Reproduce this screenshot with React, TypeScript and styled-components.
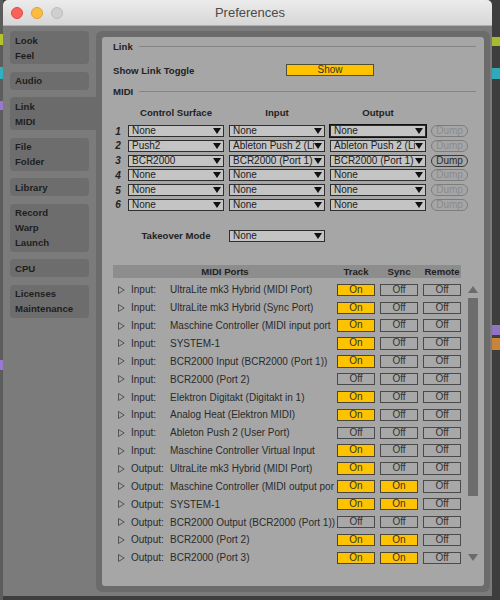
import React from 'react';
import styled, { createGlobalStyle } from 'styled-components';

const Global = createGlobalStyle`
  html, body { margin: 0; padding: 0; background: #3f3f3f; }
  body { font-family: "Liberation Sans", Arial, sans-serif; color: #222; }
`;

const Screen = styled.div`
  width: 500px;
  height: 600px;
  display: flex;
  align-items: flex-start;
  background: #3e3e3e;
  overflow: hidden;
`;

const Strip = styled.div<{ $w: number; $bg: string }>`
  width: ${(p) => p.$w}px;
  height: 600px;
  flex-shrink: 0;
  display: flex;
  flex-direction: column;
  background: ${(p) => p.$bg};
`;

const Tick = styled.div<{ $h: number; $c?: string }>`
  height: ${(p) => p.$h}px;
  flex-shrink: 0;
  background: ${(p) => p.$c || 'transparent'};
`;

const Window = styled.div`
  width: 489px;
  height: 596px;
  flex-shrink: 0;
  display: flex;
  flex-direction: column;
  border-radius: 5px 5px 0 0;
  overflow: hidden;
`;

const TitleBar = styled.div`
  height: 25px;
  flex-shrink: 0;
  display: grid;
  grid-template-columns: 70px 1fr 70px;
  align-items: center;
  background: linear-gradient(#ececec, #d6d6d6);
  border-bottom: 1px solid #b0b0b0;
`;

const Lights = styled.div`
  display: flex;
  gap: 8px;
  padding-left: 8px;
`;

const Light = styled.div<{ $c: string; $b: string }>`
  width: 12px;
  height: 12px;
  border-radius: 50%;
  box-sizing: border-box;
  background: ${(p) => p.$c};
  border: 1px solid ${(p) => p.$b};
`;

const Title = styled.div`
  text-align: center;
  font-size: 13px;
  color: #4a4a4a;
  padding-left: 5px;
  font-family: "Liberation Sans", Arial, sans-serif;
`;

const Body = styled.div`
  flex: 1;
  display: flex;
  background: #7b7b7b;
`;

const Sidebar = styled.div`
  width: 93px;
  flex-shrink: 0;
  box-sizing: border-box;
  padding: 5px 0 0 7px;
  display: flex;
  flex-direction: column;
  gap: 7.5px;
`;

const Tab = styled.div<{ $active?: boolean }>`
  width: ${(p) => (p.$active ? 86 : 79)}px;
  box-sizing: border-box;
  padding: 1.5px 5px;
  background: ${(p) => (p.$active ? '#6b6b6b' : '#6d6d6d')};
  border-radius: ${(p) => (p.$active ? '4px 0 0 4px' : '4px')};
  font-size: 9.6px;
  font-weight: bold;
  line-height: 15px;
  color: #1e1e1e;
`;

const Frame = styled.div`
  width: 394px;
  box-sizing: border-box;
  margin: 5px 2px 4px 0;
  padding: 6px;
  background: #6b6b6b;
  border-radius: 6px;
  display: flex;
`;

const Panel = styled.div`
  flex: 1;
  background: #a6a6a6;
  border-radius: 3px;
  padding: 2px 0 0 11px;
  display: flex;
  flex-direction: column;
`;

const SectionHeader = styled.div<{ $mt?: number }>`
  height: 14px;
  margin-top: ${(p) => p.$mt || 0}px;
  display: flex;
  align-items: center;
  gap: 6px;
  padding-right: 8px;
  font-size: 9.6px;
  font-weight: bold;
`;

const Rule = styled.div`
  flex: 1;
  height: 1px;
  background: #858585;
`;

const ShowRow = styled.div`
  margin-top: 10px;
  height: 14px;
  display: grid;
  grid-template-columns: 173px 88px;
  align-items: center;
  font-size: 9.6px;
  font-weight: bold;
`;

const YellowButton = styled.div`
  height: 12px;
  box-sizing: border-box;
  background: #fdc300;
  border: 1px solid #4d4d3a;
  font-size: 10px;
  font-weight: normal;
  line-height: 10px;
  text-align: center;
  color: #333;
`;

const SurfaceGrid = styled.div<{ $mt: number }>`
  margin-top: ${(p) => p.$mt}px;
  display: grid;
  grid-template-columns: 10px 96px 96px 96px 37px;
  column-gap: 5px;
  row-gap: 2.8px;
  grid-auto-rows: 12px;
  align-items: center;
`;

const ColHead = styled.div<{ $col: number }>`
  grid-column: ${(p) => p.$col};
  text-align: center;
  font-size: 9.6px;
  font-weight: bold;
  white-space: nowrap;
`;

const Num = styled.div`
  font-size: 10px;
  font-weight: bold;
  font-style: italic;
  text-align: center;
`;

const Select = styled.div<{ $focus?: boolean; $col?: number }>`
  grid-column: ${(p) => p.$col || 'auto'};
  height: 12px;
  box-sizing: border-box;
  background: #c4c4c4;
  border: 1px solid #2e2e2e;
  outline: ${(p) => (p.$focus ? '1px solid #111' : 'none')};
  display: flex;
  align-items: center;
  padding: 0 2px 0 3px;
  font-size: 10px;
  color: #222;
  overflow: hidden;
`;

const SelectText = styled.span`
  flex: 1;
  min-width: 0;
  white-space: nowrap;
  overflow: hidden;
  line-height: 10px;
`;

const Dump = styled.div<{ $on?: boolean }>`
  height: 12px;
  box-sizing: border-box;
  border: 1px solid ${(p) => (p.$on ? '#3a3a3a' : '#7d7d7d')};
  border-radius: 6px;
  font-size: 10px;
  line-height: 10px;
  text-align: center;
  color: ${(p) => (p.$on ? '#2a2a2a' : '#8b8b8b')};
`;

const portCols = '18px 39px 167px 43px 43px 38px';

const PortsHeader = styled.div`
  margin-top: 23px;
  width: 348px;
  height: 13px;
  background: #8d8d8d;
  display: grid;
  grid-template-columns: ${portCols};
  align-items: center;
  font-size: 9.6px;
  font-weight: bold;
`;

const HeadCell = styled.div<{ $span?: string }>`
  grid-column: ${(p) => p.$span || 'auto'};
  width: ${(p) => (p.$span ? 'auto' : '38px')};
  text-align: center;
`;

const PortsBody = styled.div`
  margin-top: 3px;
  display: flex;
  gap: 7px;
`;

const PortList = styled.div`
  width: 348px;
  display: flex;
  flex-direction: column;
`;

const PortRow = styled.div`
  height: 17.87px;
  display: grid;
  grid-template-columns: ${portCols};
  align-items: center;
  font-size: 10px;
  color: #2a2a2a;
`;

const Expander = styled.div`
  display: flex;
  padding-left: 5px;
`;

const Cell = styled.div`
  white-space: nowrap;
  overflow: hidden;
`;

const Toggle = styled.div<{ $on: boolean }>`
  width: 38px;
  height: 12.5px;
  box-sizing: border-box;
  background: ${(p) => (p.$on ? '#fdc300' : '#a8a8a8')};
  border: 1px solid ${(p) => (p.$on ? '#4a4536' : '#4a4a4a')};
  text-align: center;
  font-size: 10px;
  line-height: 10.5px;
  color: #333;
`;

const Scrollbar = styled.div`
  width: 10px;
  display: flex;
  flex-direction: column;
  align-items: center;
  padding: 5.5px 0 5.5px;
`;

const Thumb = styled.div`
  margin-top: 4.5px;
  width: 10px;
  height: 198px;
  background: #6d6d6d;
`;

const Spacer = styled.div`
  flex: 1;
`;

const Arrow = ({ up }: { up?: boolean }) => (
  <svg width="10" height="7" viewBox="0 0 10 7">
    <polygon points={up ? '5,0 10,7 0,7' : '0,0 10,0 5,7'} fill="#6b6b6b" />
  </svg>
);

const DropArrow = () => (
  <svg width="8" height="6" viewBox="0 0 8 6">
    <polygon points="0,0 8,0 4,6" fill="#111" />
  </svg>
);

const OpenTri = () => (
  <svg width="7" height="8" viewBox="0 0 7 8">
    <polygon points="0.5,0.5 6.2,4 0.5,7.5" fill="none" stroke="#555" strokeWidth="1" />
  </svg>
);

const surfaces: [string, string, string, boolean][] = [
  ['None', 'None', 'None', false],
  ['Push2', 'Ableton Push 2 (Li', 'Ableton Push 2 (Li', false],
  ['BCR2000', 'BCR2000 (Port 1)', 'BCR2000 (Port 1)', true],
  ['None', 'None', 'None', false],
  ['None', 'None', 'None', false],
  ['None', 'None', 'None', false],
];

const ports: [string, string, boolean, boolean, boolean][] = [
  ['Input:', 'UltraLite mk3 Hybrid (MIDI Port)', true, false, false],
  ['Input:', 'UltraLite mk3 Hybrid (Sync Port)', true, false, false],
  ['Input:', 'Maschine Controller (MIDI input port', true, false, false],
  ['Input:', 'SYSTEM-1', true, false, false],
  ['Input:', 'BCR2000 Input (BCR2000 (Port 1))', true, false, false],
  ['Input:', 'BCR2000 (Port 2)', false, false, false],
  ['Input:', 'Elektron Digitakt (Digitakt in 1)', true, false, false],
  ['Input:', 'Analog Heat (Elektron MIDI)', true, false, false],
  ['Input:', 'Ableton Push 2 (User Port)', false, false, false],
  ['Input:', 'Maschine Controller Virtual Input', true, false, false],
  ['Output:', 'UltraLite mk3 Hybrid (MIDI Port)', true, false, false],
  ['Output:', 'Maschine Controller (MIDI output por', true, true, false],
  ['Output:', 'SYSTEM-1', true, true, false],
  ['Output:', 'BCR2000 Output (BCR2000 (Port 1))', false, false, false],
  ['Output:', 'BCR2000 (Port 2)', true, true, false],
  ['Output:', 'BCR2000 (Port 3)', true, true, false],
];

const tabs: { lines: string[]; active?: boolean }[] = [
  { lines: ['Look', 'Feel'] },
  { lines: ['Audio'] },
  { lines: ['Link', 'MIDI'], active: true },
  { lines: ['File', 'Folder'] },
  { lines: ['Library'] },
  { lines: ['Record', 'Warp', 'Launch'] },
  { lines: ['CPU'] },
  { lines: ['Licenses', 'Maintenance'] },
];

export default function App() {
  return (
    <>
      <Global />
      <Screen>
        <Strip $w={3} $bg="#5c5c5c">
          <Tick $h={34} />
          <Tick $h={11} $c="#b4c52c" />
          <Tick $h={22} />
          <Tick $h={12} $c="#32b0c0" />
          <Tick $h={22} />
          <Tick $h={9} $c="#9a78cf" />
          <Tick $h={250} />
          <Tick $h={10} $c="#9a78cf" />
        </Strip>
        <Window>
          <TitleBar>
            <Lights>
              <Light $c="#fc605b" $b="#de4a43" />
              <Light $c="#fdbc40" $b="#dea236" />
              <Light $c="#cfcfcf" $b="#bdbdbd" />
            </Lights>
            <Title>Preferences</Title>
            <div />
          </TitleBar>
          <Body>
            <Sidebar>
              {tabs.map((t, i) => (
                <Tab key={i} $active={t.active}>
                  {t.lines.map((l) => (
                    <div key={l}>{l}</div>
                  ))}
                </Tab>
              ))}
            </Sidebar>
            <Frame>
              <Panel>
                <SectionHeader>
                  Link
                  <Rule />
                </SectionHeader>
                <ShowRow>
                  <div>Show Link Toggle</div>
                  <YellowButton>Show</YellowButton>
                </ShowRow>
                <SectionHeader $mt={7}>
                  MIDI
                  <Rule />
                </SectionHeader>
                <SurfaceGrid $mt={8}>
                  <ColHead $col={2}>Control Surface</ColHead>
                  <ColHead $col={3}>Input</ColHead>
                  <ColHead $col={4}>Output</ColHead>
                </SurfaceGrid>
                <SurfaceGrid $mt={7}>
                  {surfaces.map((s, i) => (
                    <React.Fragment key={i}>
                      <Num>{i + 1}</Num>
                      <Select>
                        <SelectText>{s[0]}</SelectText>
                        <DropArrow />
                      </Select>
                      <Select>
                        <SelectText>{s[1]}</SelectText>
                        <DropArrow />
                      </Select>
                      <Select $focus={i === 0}>
                        <SelectText>{s[2]}</SelectText>
                        <DropArrow />
                      </Select>
                      <Dump $on={s[3]}>Dump</Dump>
                    </React.Fragment>
                  ))}
                </SurfaceGrid>
                <SurfaceGrid $mt={19}>
                  <ColHead $col={2}>Takeover Mode</ColHead>
                  <Select $col={3}>
                    <SelectText>None</SelectText>
                    <DropArrow />
                  </Select>
                </SurfaceGrid>
                <PortsHeader>
                  <HeadCell $span="1 / 4">MIDI Ports</HeadCell>
                  <HeadCell>Track</HeadCell>
                  <HeadCell>Sync</HeadCell>
                  <HeadCell>Remote</HeadCell>
                </PortsHeader>
                <PortsBody>
                  <PortList>
                    {ports.map((p, i) => (
                      <PortRow key={i}>
                        <Expander>
                          <OpenTri />
                        </Expander>
                        <Cell>{p[0]}</Cell>
                        <Cell>{p[1]}</Cell>
                        <Toggle $on={p[2]}>{p[2] ? 'On' : 'Off'}</Toggle>
                        <Toggle $on={p[3]}>{p[3] ? 'On' : 'Off'}</Toggle>
                        <Toggle $on={p[4]}>{p[4] ? 'On' : 'Off'}</Toggle>
                      </PortRow>
                    ))}
                  </PortList>
                  <Scrollbar>
                    <Arrow up />
                    <Thumb />
                    <Spacer />
                    <Arrow />
                  </Scrollbar>
                </PortsBody>
              </Panel>
            </Frame>
          </Body>
        </Window>
        <Strip $w={8} $bg="#3d3d3d">
          <Tick $h={37} />
          <Tick $h={9} $c="#a9bb2c" />
          <Tick $h={22} />
          <Tick $h={11} $c="#2fa9bb" />
          <Tick $h={246} />
          <Tick $h={10} $c="#8f74c6" />
          <Tick $h={3} />
          <Tick $h={12} $c="#c9843a" />
        </Strip>
      </Screen>
    </>
  );
}
